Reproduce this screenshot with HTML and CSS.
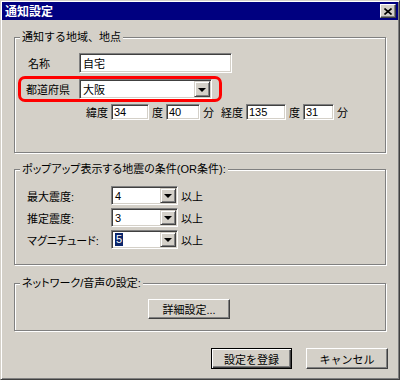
FILE: index.html
```html
<!DOCTYPE html>
<html lang="ja">
<head>
    <meta charset="UTF-8">
    <title>通知設定</title>
    <link rel="stylesheet" href="styles.css">
</head>
<body>
    <div class="window">
        <div class="titlebar">
            <span class="title">通知設定</span>
            <span class="close-btn">
                <svg width="8" height="7" viewBox="0 0 8 7"><path d="M0.5 0.5 L7.5 6.5 M7.5 0.5 L0.5 6.5" stroke="#000" stroke-width="1.6" fill="none"/></svg>
            </span>
        </div>

        <div class="dialog">
            <fieldset class="group group-place">
                <legend>通知する地域、地点</legend>
                <div class="row row-name">
                    <span class="name-label">名称</span>
                    <div class="edit edit-name">自宅</div>
                </div>
                <div class="highlight">
                    <span class="pref-label">都道府県</span>
                    <div class="combo combo-pref">
                        <span class="combo-text">大阪</span>
                        <span class="combo-btn"></span>
                    </div>
                </div>
                <div class="row row-coord">
                    <span>緯度</span>
                    <div class="edit small w-lat1">34</div>
                    <span>度</span>
                    <div class="edit small w-lat2">40</div>
                    <span>分</span>
                    <span class="lon-label">経度</span>
                    <div class="edit small w-lon1">135</div>
                    <span>度</span>
                    <div class="edit small w-lon2">31</div>
                    <span>分</span>
                </div>
            </fieldset>

            <fieldset class="group group-cond">
                <legend>ポップアップ表示する地震の条件(OR条件):</legend>
                <div class="cond-row">
                    <span class="cond-label">最大震度:</span>
                    <div class="combo combo-cond">
                        <span class="combo-text">4</span>
                        <span class="combo-btn"></span>
                    </div>
                    <span>以上</span>
                </div>
                <div class="cond-row">
                    <span class="cond-label">推定震度:</span>
                    <div class="combo combo-cond">
                        <span class="combo-text">3</span>
                        <span class="combo-btn"></span>
                    </div>
                    <span>以上</span>
                </div>
                <div class="cond-row">
                    <span class="cond-label">マグニチュード:</span>
                    <div class="combo combo-cond">
                        <span class="combo-text"><span class="sel">5</span></span>
                        <span class="combo-btn"></span>
                    </div>
                    <span>以上</span>
                </div>
            </fieldset>

            <fieldset class="group group-net">
                <legend>ネットワーク/音声の設定:</legend>
                <button class="btn btn-detail">詳細設定...</button>
            </fieldset>

            <div class="actions">
                <button class="btn btn-default">設定を登録</button>
                <button class="btn btn-cancel">キャンセル</button>
            </div>
        </div>
    </div>
</body>
</html>
```

FILE: styles.css
```css
* {
    box-sizing: border-box;
    margin: 0;
    padding: 0;
}

body {
    width: 400px;
    height: 380px;
    font-family: "Liberation Sans", "Noto Sans CJK JP", sans-serif;
    font-size: 11px;
    color: #000;
    background-color: #d4d0c8;
    overflow: hidden;
}

.window {
    width: 400px;
    height: 380px;
    padding: 1px;
    background-color: #d4d0c8;
    border: 1px solid;
    border-color: #d4d0c8 #404040 #404040 #d4d0c8;
    box-shadow: inset 1px 1px 0 #fff, inset -1px -1px 0 #808080;
}

/* title bar */
.titlebar {
    height: 18px;
    background-color: #000080;
    color: #fff;
    display: flex;
    align-items: center;
    justify-content: space-between;
    padding: 0 2px 0 3px;
}

.title {
    font-family: "Noto Sans CJK JP", sans-serif;
    font-size: 12px;
    font-weight: bold;
    line-height: 14px;
}

.close-btn {
    width: 16px;
    height: 14px;
    background-color: #d4d0c8;
    border: 1px solid;
    border-color: #fff #404040 #404040 #fff;
    box-shadow: inset -1px -1px 0 #808080;
    display: flex;
    align-items: center;
    justify-content: center;
}

.close-btn svg {
    display: block;
}

.dialog {
    padding: 10px 12px 0 12px;
}

/* group boxes */
fieldset {
    border: 1px solid #808080;
    box-shadow: inset 1px 1px 0 #fff, 1px 1px 0 #fff;
    min-width: 0;
    padding: 9px 3px 32px;
}

legend {
    margin-left: 2px;
    padding: 0 2px;
    line-height: 14px;
    background-color: #d4d0c8;
}

.group-cond legend,
.group-net legend {
    font-feature-settings: "palt";
}

.group-cond {
    margin-top: 9px;
    padding: 10px 3px 15px;
}

.group-net {
    margin-top: 11px;
    padding: 9px 3px 11px;
}

/* edit boxes */
.edit {
    height: 20px;
    background-color: #fff;
    border: 1px solid;
    border-color: #808080 #fff #fff #808080;
    box-shadow: inset 1px 1px 0 #404040, inset -1px -1px 0 #d4d0c8;
    padding: 0 3px;
    display: flex;
    align-items: center;
}

.edit.small {
    height: 16px;
    padding: 0 2px;
}

.w-lat1 { width: 38px; }
.w-lat2 { width: 34px; }
.w-lon1 { width: 40px; }
.w-lon2 { width: 31px; }

/* combo boxes */
.combo {
    height: 20px;
    background-color: #fff;
    border: 1px solid;
    border-color: #808080 #fff #fff #808080;
    box-shadow: inset 1px 1px 0 #404040, inset -1px -1px 0 #d4d0c8;
    padding: 1px;
    display: flex;
}

.combo-text {
    flex: 1;
    display: flex;
    align-items: center;
    padding-left: 2px;
}

.combo-btn {
    width: 16px;
    background-color: #d4d0c8;
    border: 1px solid;
    border-color: #d4d0c8 #404040 #404040 #d4d0c8;
    box-shadow: inset 1px 1px 0 #fff, inset -1px -1px 0 #808080;
    display: flex;
    align-items: center;
    justify-content: center;
}

.combo-btn::after {
    content: "";
    border-left: 4px solid transparent;
    border-right: 4px solid transparent;
    border-top: 4px solid #000;
    margin-top: 1px;
}

.sel {
    background-color: #0a246a;
    color: #fff;
    padding: 0 1px;
    line-height: 13px;
}

/* place group rows */
.row {
    display: flex;
    align-items: center;
}

.row-name {
    padding-left: 10px;
}

.name-label {
    width: 51px;
}

.edit-name {
    width: 153px;
}

.highlight {
    display: flex;
    align-items: center;
    width: 204px;
    margin-top: 3px;
    padding: 0 7px 0 5px;
    border: 3px solid #f00;
    border-radius: 7px;
}

.pref-label {
    width: 53px;
}

.combo-pref {
    width: 133px;
}

.row-coord {
    margin-top: 2px;
    padding-left: 68px;
    gap: 3px;
}

.lon-label {
    margin-left: 4px;
}

/* condition group rows */
.cond-row {
    display: flex;
    align-items: center;
    gap: 3px;
    padding-left: 9px;
}

.cond-row + .cond-row {
    margin-top: 3px;
}

.cond-label {
    width: 81px;
    font-feature-settings: "palt";
}

.combo-cond {
    width: 67px;
    height: 19px;
}

/* buttons */
.btn {
    font: inherit;
    color: #000;
    height: 21px;
    background-color: #d4d0c8;
    border: 1px solid;
    border-color: #fff #404040 #404040 #fff;
    box-shadow: inset -1px -1px 0 #808080;
    display: flex;
    align-items: center;
    justify-content: center;
    cursor: pointer;
}

.btn-detail {
    width: 82px;
    height: 20px;
    margin-left: 130px;
}

.actions {
    display: flex;
    justify-content: flex-end;
    gap: 14px;
    margin-top: 17px;
    margin-right: -2px;
}

.btn-default {
    width: 81px;
    border-color: #000;
    box-shadow: inset 1px 1px 0 #fff, inset -1px -1px 0 #404040, inset -2px -2px 0 #808080;
}

.btn-cancel {
    width: 82px;
}
```
